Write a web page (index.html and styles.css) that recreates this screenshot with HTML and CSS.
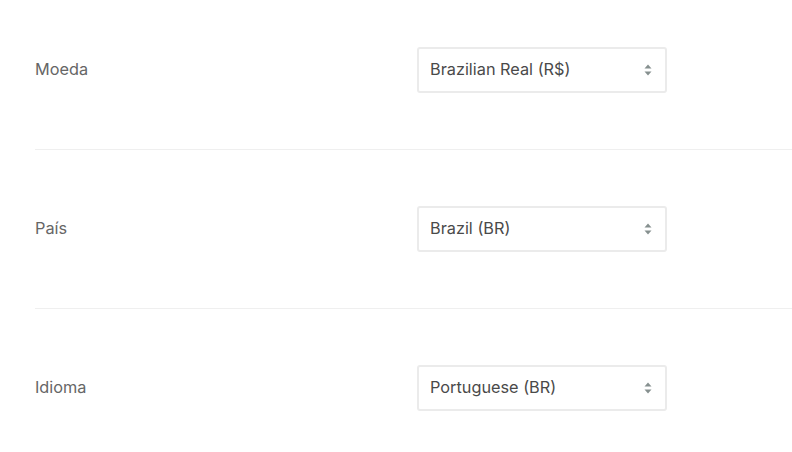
FILE: index.html
```html
<!DOCTYPE html>
<html lang="pt">
<head>
<meta charset="utf-8">
<title>Configurações</title>
<link rel="stylesheet" href="styles.css">
</head>
<body>
<div class="settings">
  <div class="row first">
    <div class="label">Moeda</div>
    <div class="select">
      <span class="value">Brazilian Real (R$)</span>
      <svg class="arrows" width="8" height="12" viewBox="0 0 8 12"><path d="M4 0.5 L7.5 4.5 L0.5 4.5 Z" /><path d="M0.5 7.5 L7.5 7.5 L4 11.5 Z" /></svg>
    </div>
  </div>
  <div class="row">
    <div class="label">País</div>
    <div class="select">
      <span class="value">Brazil (BR)</span>
      <svg class="arrows" width="8" height="12" viewBox="0 0 8 12"><path d="M4 0.5 L7.5 4.5 L0.5 4.5 Z" /><path d="M0.5 7.5 L7.5 7.5 L4 11.5 Z" /></svg>
    </div>
  </div>
  <div class="row last">
    <div class="label">Idioma</div>
    <div class="select">
      <span class="value">Portuguese (BR)</span>
      <svg class="arrows" width="8" height="12" viewBox="0 0 8 12"><path d="M4 0.5 L7.5 4.5 L0.5 4.5 Z" /><path d="M0.5 7.5 L7.5 7.5 L4 11.5 Z" /></svg>
    </div>
  </div>
</div>
</body>
</html>
```

FILE: styles.css
```css
html, body {
  margin: 0;
  padding: 0;
  background: #ffffff;
  overflow: hidden;
}
body {
  font-family: "Inter", "Lato", sans-serif;
  font-size: 16.3px;
  font-weight: 400;
  color: #666666;
}
.settings {
  padding-left: 35px;
}
.row {
  display: flex;
  align-items: center;
  padding: 56px 0;
  border-bottom: 1px solid #efefef;
}
.row.first {
  padding-top: 47px;
}
.row.last {
  border-bottom: none;
}
.label {
  width: 382px;
  flex: none;
  color: #666666;
  padding-bottom: 2px;
}
.select {
  box-sizing: border-box;
  width: 250px;
  height: 46px;
  border: 2px solid #ebebeb;
  border-radius: 3px;
  display: flex;
  align-items: center;
  justify-content: space-between;
  padding: 0 13px 0 11px;
  color: #4a4a4a;
}
.value {
  padding-bottom: 2px;
}
.arrows {
  fill: #86908f;
  display: block;
}
```
